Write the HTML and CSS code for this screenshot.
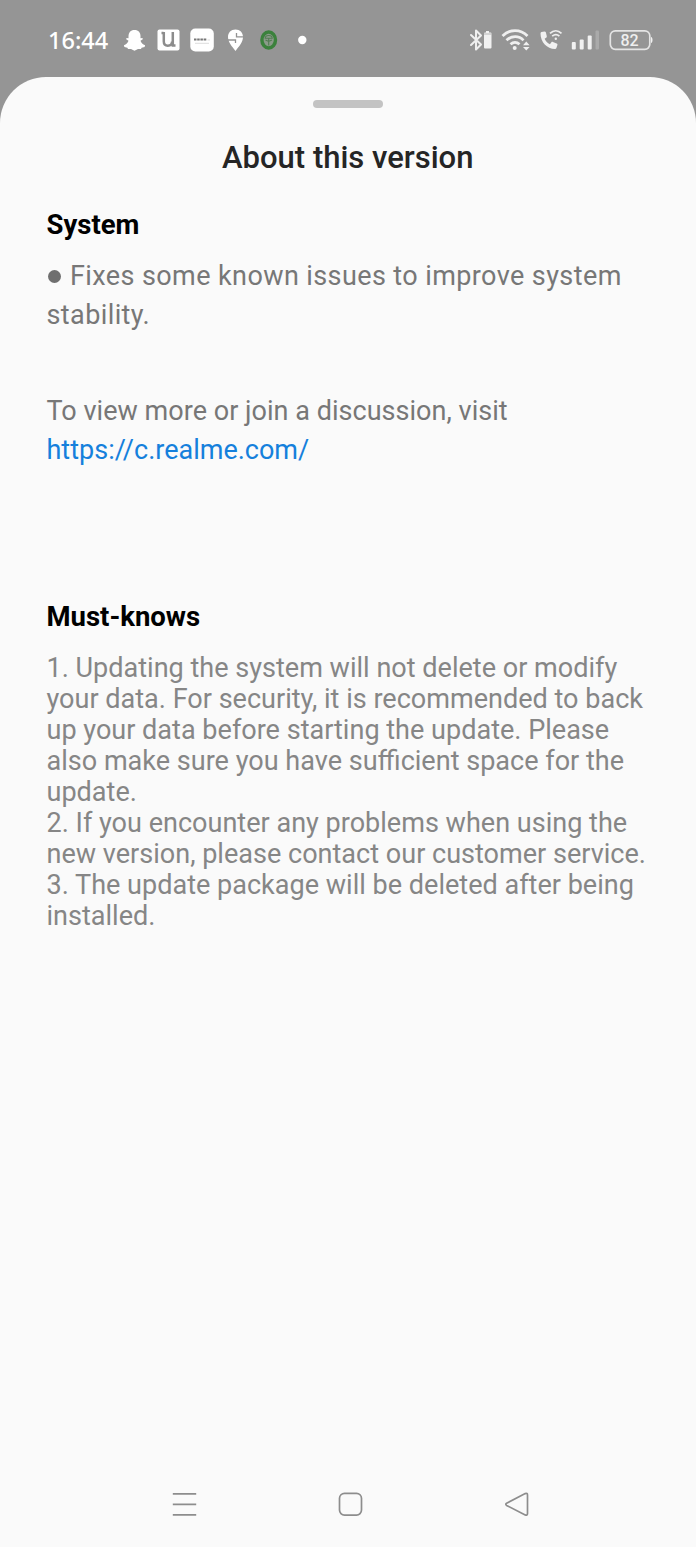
FILE: index.html
```html
<!DOCTYPE html>
<html lang="en">
<head>
<meta charset="utf-8">
<title>About this version</title>
<link rel="stylesheet" href="styles.css">
</head>
<body>
<header class="status">
  <span class="clock">16:44</span>
  <svg class="status-left" viewBox="120 20 200 40" width="200" height="40">
    <path fill="#fff" d="M134.500 30c4 0 6 2.700 6 6.200v2l2-.3.300 1.300-2.300 1.500c.8 2.200 2.200 3.600 4.600 4.600l-.5 1.700-3 .7-.6 1.400-3-.1-3.500 1.700-3.500-1.700-3 .1-.6-1.400-3-.7-.5-1.700c2.400-1 3.800-2.400 4.600-4.600l-2.300-1.500.3-1.300 2 .3v-2c0-3.500 2-6.200 6-6.200z"/>
    <rect x="157.500" y="29.500" width="22" height="21" rx="2" fill="#fff"/>
    <path d="M163.800 32v9.500c0 3 1.500 4.200 4 4.200s4.300-1.500 4.300-4.200M172.800 32v13.500h2.700M161.500 33h2" fill="none" stroke="#8c8c8c" stroke-width="2.500"/>
    <rect x="190.300" y="28.500" width="23.500" height="23" rx="5" fill="#fff"/>
    <path d="M194 39.500h13" stroke="#777" stroke-width="1.800" stroke-dasharray="2.500 .7"/>
    <path d="M207.500 40h2.500M195 43.300h14" stroke="#ddd" stroke-width="1"/>
    <path fill="#fff" d="M235.500 29.500c4.500 0 7.500 3 7.500 7.500 0 5-4 9.500-7.500 14-3.500-4.500-7.500-9-7.500-14 0-4.500 3-7.500 7.500-7.500z"/>
    <path d="M236.500 33v3.800h6.500M228 40h7.500v3" fill="none" stroke="#929292" stroke-width="1.300"/>
    <ellipse cx="268.700" cy="40" rx="6.800" ry="8" fill="#8b9a8a" stroke="#3b813c" stroke-width="3.400"/>
    <path d="M268.700 35.500c-2.500 0-3.500 1.200-3.500 2.800h7c0-1.600-1-2.800-3.500-2.800zM265.500 40l3.200 1.500 3.200-1.500M268.700 38v7.500" fill="none" stroke="#527c52" stroke-width="1.100"/>
    <circle cx="302.300" cy="40" r="4.200" fill="#fff"/>
  </svg>
  <svg class="status-right" viewBox="464 20 192 40" width="192" height="40">
    <g fill="none" stroke="#efefef" stroke-linecap="round" stroke-linejoin="round">
      <path stroke-width="2" d="M471 35l10 9.500-5 5v-19l5 5-10 9.500"/>
      <path stroke-width="2.700" stroke-linecap="butt" d="M502.500 36c7-7.300 18-7.300 25 0M506.500 40.300c5-5 12.500-5 17 0M510.500 44.300c2.700-2.500 6.300-2.500 9 0"/>
      <path stroke-width="1.700" stroke-linecap="butt" d="M550 33.300c3.500-3.400 8-3.400 11.500 0M552.200 36.200c2.500-2 5-2 7.200 0"/>
    </g>
    <g fill="#f1f1f1">
      <path d="M486 31h3v1.500h1.500a1 1 0 0 1 1 1v14a1 1 0 0 1-1 1H485a1 1 0 0 1-1-1v-14a1 1 0 0 1 1-1h1z"/>
      <circle cx="514.700" cy="48" r="2"/>
      <path d="M526.300 41.500l3.300 3.800h-6.600zM523 47h6.600l-3.300 3.500z"/>
      <circle cx="555.800" cy="38.800" r="1.200"/>
      <path d="M541.500 32l3-.5c.7 0 1.200.3 1.400 1l.9 3.800c.1.700-.2 1.200-.7 1.500l-1.500 1c1.200 2.700 2.800 4.400 5.300 5.500l1.500-2c.4-.5 1-.6 1.500-.4l3.700 1.700c.7.300 1 .8.800 1.500l-1 3c-.2.700-.7 1-1.400 1C547 49 540.500 42 540.500 33.500c0-.8.300-1.300 1-1.500z"/>
      <rect x="571.800" y="42" width="4" height="7.500" rx="1"/>
      <rect x="579.700" y="39.500" width="4" height="10" rx="1"/>
      <rect x="587.700" y="35.500" width="4" height="14" rx="1"/>
      <rect x="595.500" y="30.500" width="3.500" height="19" rx="1" fill="#aaa"/>
      <path d="M651 37c2 0 2 6 0 6z"/>
    </g>
    <path d="M491.500 34h-7.500" stroke="#aaa" stroke-width=".8"/>
    <rect x="610.300" y="30.800" width="39.500" height="18.500" rx="5" fill="none" stroke="#e4e4e4" stroke-width="1.700"/>
    <text class="battery" x="629.500" y="46" text-anchor="middle">82</text>
  </svg>
</header>
<main class="sheet">
  <div class="handle"></div>
  <h1 class="title">About this version</h1>
  <h2 class="heading">System</h2>
  <p class="notes fixes"><span class="bullet"></span>Fixes some known issues to improve system<br>stability.</p>
  <p class="notes visit">To view more or join a discussion, visit<br><a class="link">https://c.realme.com/</a></p>
  <h2 class="heading must">Must-knows</h2>
  <p class="terms">1. Updating the system will not delete or modify<br>your data. For security, it is recommended to back<br>up your data before starting the update. Please<br>also make sure you have sufficient space for the<br>update.<br>2. If you encounter any problems when using the<br>new version, please contact our customer service.<br>3. The update package will be deleted after being<br>installed.</p>
</main>
<nav class="nav">
  <svg width="26" height="26" viewBox="0 0 26 26"><path d="M1.800 2.800h23.400M1.800 13.300h23.400M1.800 23.800h23.400"/></svg>
  <svg width="26" height="26" viewBox="0 0 26 26"><rect x="1.500" y="2.300" width="22" height="21.800" rx="5"/></svg>
  <svg width="26" height="26" viewBox="0 0 26 26"><path d="M2.600 12.200L21.200 2.600q2.300-.8 2.300 1.500v18.300q0 2.300-2.300 1.500L2.600 14.400q-1.600-1.100 0-2.200z"/></svg>
</nav>
</body>
</html>
```
FILE: styles.css
```css
* { box-sizing: border-box; }
body {
  margin: 0;
  width: 696px;
  height: 1547px;
  display: flex;
  flex-direction: column;
  background: #959595;
  font-family: Roboto, sans-serif;
  overflow: hidden;
}
.status {
  height: 77px;
  flex: none;
  display: flex;
  align-items: flex-start;
  padding: 20px 40px 0 48px;
}
.clock {
  width: 72px;
  color: #fff;
  font-family: "Noto Sans", sans-serif;
  font-size: 23.500px;
  line-height: 40px;
  font-weight: 500;
  white-space: nowrap;
}
.status-right { margin-left: auto; }
.battery { fill: #eee; font-size: 16px; font-weight: 500; }
.sheet {
  flex: 1;
  background: #fafafa;
  border-radius: 46px 46px 0 0;
  padding: 23px 47px 0 46.500px;
  white-space: nowrap;
}
.handle {
  width: 70px;
  height: 8px;
  margin: 0 auto;
  border-radius: 4px;
  background: #c3c3c3;
}
.title {
  margin: 32px 0 0;
  text-align: center;
  font-size: 31px;
  line-height: 36px;
  font-weight: 500;
  color: #252525;
}
.heading {
  margin: 33px 0 0;
  font-size: 27.500px;
  line-height: 32px;
  font-weight: 700;
  color: #000;
}
.notes {
  margin: 16px 0 0;
  font-size: 27px;
  line-height: 38.700px;
  color: #777;
}
.fixes { letter-spacing: .4px; }
.bullet {
  display: inline-block;
  width: 13px;
  height: 13px;
  margin: 0 9px 2px 1.500px;
  border-radius: 50%;
  background: #6f6f6f;
}
.visit { margin-top: 58px; letter-spacing: .03px; }
.link { color: #1580dc; letter-spacing: 0; }
.must { margin-top: 131.500px; }
.terms {
  margin: 20px 0 0;
  font-size: 27.050px;
  line-height: 30.950px;
  color: #868686;
}
.nav {
  height: 86px;
  flex: none;
  display: flex;
  justify-content: space-between;
  padding: 30px 166px 0 171px;
  background: #fafafa;
}
.nav svg { fill: none; stroke: #8d8d8d; stroke-width: 1.700px; }
```
